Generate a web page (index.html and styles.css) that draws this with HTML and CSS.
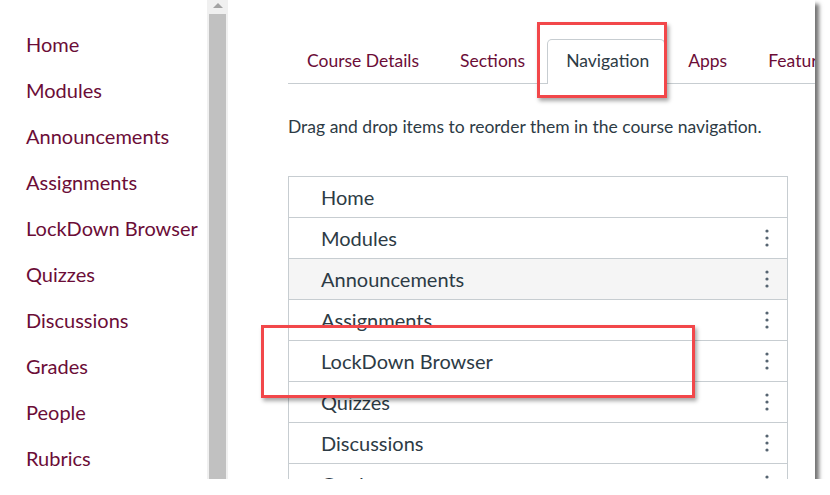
FILE: index.html
```html
<!DOCTYPE html>
<html lang="en">
<head>
    <meta charset="UTF-8">
    <title>Course Settings - Navigation</title>
    <link rel="stylesheet" href="styles.css">
</head>
<body>

    <div class="shot">
        <ul class="course-menu">
            <li>Home</li>
            <li>Modules</li>
            <li>Announcements</li>
            <li>Assignments</li>
            <li>LockDown Browser</li>
            <li>Quizzes</li>
            <li>Discussions</li>
            <li>Grades</li>
            <li>People</li>
            <li>Rubrics</li>
        </ul>

        <div class="scrollbar">
            <div class="scroll-arrow"></div>
            <div class="scroll-thumb"></div>
        </div>

        <div class="main">
            <div class="tabs">
                <div class="tab">Course Details</div>
                <div class="tab">Sections</div>
                <div class="tab active">Navigation</div>
                <div class="tab">Apps</div>
                <div class="tab">Feature Options</div>
            </div>

            <p class="hint">Drag and drop items to reorder them in the course navigation.</p>

            <ul class="nav-list">
                <li>Home</li>
                <li>Modules <svg class="kebab" width="4" height="18" viewBox="0 0 4 18"><circle cx="2" cy="2" r="1.6"/><circle cx="2" cy="9" r="1.6"/><circle cx="2" cy="16" r="1.6"/></svg></li>
                <li class="hover">Announcements <svg class="kebab" width="4" height="18" viewBox="0 0 4 18"><circle cx="2" cy="2" r="1.6"/><circle cx="2" cy="9" r="1.6"/><circle cx="2" cy="16" r="1.6"/></svg></li>
                <li>Assignments <svg class="kebab" width="4" height="18" viewBox="0 0 4 18"><circle cx="2" cy="2" r="1.6"/><circle cx="2" cy="9" r="1.6"/><circle cx="2" cy="16" r="1.6"/></svg></li>
                <li>LockDown Browser <svg class="kebab" width="4" height="18" viewBox="0 0 4 18"><circle cx="2" cy="2" r="1.6"/><circle cx="2" cy="9" r="1.6"/><circle cx="2" cy="16" r="1.6"/></svg></li>
                <li>Quizzes <svg class="kebab" width="4" height="18" viewBox="0 0 4 18"><circle cx="2" cy="2" r="1.6"/><circle cx="2" cy="9" r="1.6"/><circle cx="2" cy="16" r="1.6"/></svg></li>
                <li>Discussions <svg class="kebab" width="4" height="18" viewBox="0 0 4 18"><circle cx="2" cy="2" r="1.6"/><circle cx="2" cy="9" r="1.6"/><circle cx="2" cy="16" r="1.6"/></svg></li>
                <li>Grades <svg class="kebab" width="4" height="18" viewBox="0 0 4 18"><circle cx="2" cy="2" r="1.6"/><circle cx="2" cy="9" r="1.6"/><circle cx="2" cy="16" r="1.6"/></svg></li>
            </ul>
        </div>

        <!-- callout boxes drawn over the screenshot -->
        <div class="callout callout-tab"></div>
        <div class="callout callout-row"></div>
    </div>

</body>
</html>
```

FILE: styles.css
```css
body {
    margin: 0;
    background-color: white;
    font-family: Lato, "Open Sans", sans-serif;
}

.shot {
    position: relative;
    width: 815px;
    height: 479px;
    display: flex;
    overflow: hidden;
    background-color: white;
    box-shadow: 4px 4px 4px rgba(0, 0, 0, 0.55);
}

/* left course menu */
.course-menu {
    list-style: none;
    margin: 0;
    padding: 21px 0 0 26px;
    width: 181px;
    flex-shrink: 0;
}

.course-menu li {
    font-size: 20px;
    line-height: 46px;
    height: 46px;
    color: #6b0d37;
    white-space: nowrap;
}

.scrollbar {
    width: 21px;
    flex-shrink: 0;
    background-color: #f0f0f0;
    display: flex;
    flex-direction: column;
    align-items: center;
}

.scroll-arrow {
    margin-top: 3px;
    width: 0;
    height: 0;
    border-left: 5px solid transparent;
    border-right: 5px solid transparent;
    border-bottom: 5px solid #a3a3a3;
}

.scroll-thumb {
    margin-top: 6px;
    width: 17px;
    flex: 1;
    background-color: #c1c1c1;
}

/* main content */
.main {
    flex: 1;
    padding: 39px 0 0 60px;
    min-width: 0;
}

.tabs {
    display: flex;
    height: 44px;
    border-bottom: 1px solid #c7cdd1;
    white-space: nowrap;
}

.tab {
    padding: 0 21px 0 18px;
    font-size: 17.5px;
    line-height: 41px;
    color: #6b0d37;
    border: 1px solid transparent;
    border-bottom: none;
}

.tab.active {
    color: #2d3b45;
    background-color: white;
    border-color: #c7cdd1;
    border-radius: 5px 5px 0 0;
    margin-bottom: -1px;
    padding: 0 15px 0 18px;
    margin-right: 4px;
}

.hint {
    margin: 33px 0 0 0;
    font-size: 17.5px;
    line-height: 20px;
    color: #2d3b45;
}

.nav-list {
    list-style: none;
    margin: 39px 0 0 0;
    padding: 0;
    width: 498px;
    border: 1px solid #c7cdd1;
    border-bottom: none;
}

.nav-list li {
    display: flex;
    justify-content: space-between;
    align-items: center;
    height: 40px;
    padding: 0 18px 0 32px;
    border-bottom: 1px solid #c7cdd1;
    font-size: 20px;
    color: #2d3b45;
}

.nav-list li.hover {
    background-color: #f5f5f5;
}

.kebab {
    fill: #566471;
}

/* red highlight boxes */
.callout {
    position: absolute;
    border: 3px solid #f2474a;
    box-shadow: 2px 3px 4px rgba(0, 0, 0, 0.35);
}

.callout-tab {
    left: 537px;
    top: 22px;
    width: 124px;
    height: 70px;
}

.callout-row {
    left: 261px;
    top: 325px;
    width: 428px;
    height: 67px;
}
```
